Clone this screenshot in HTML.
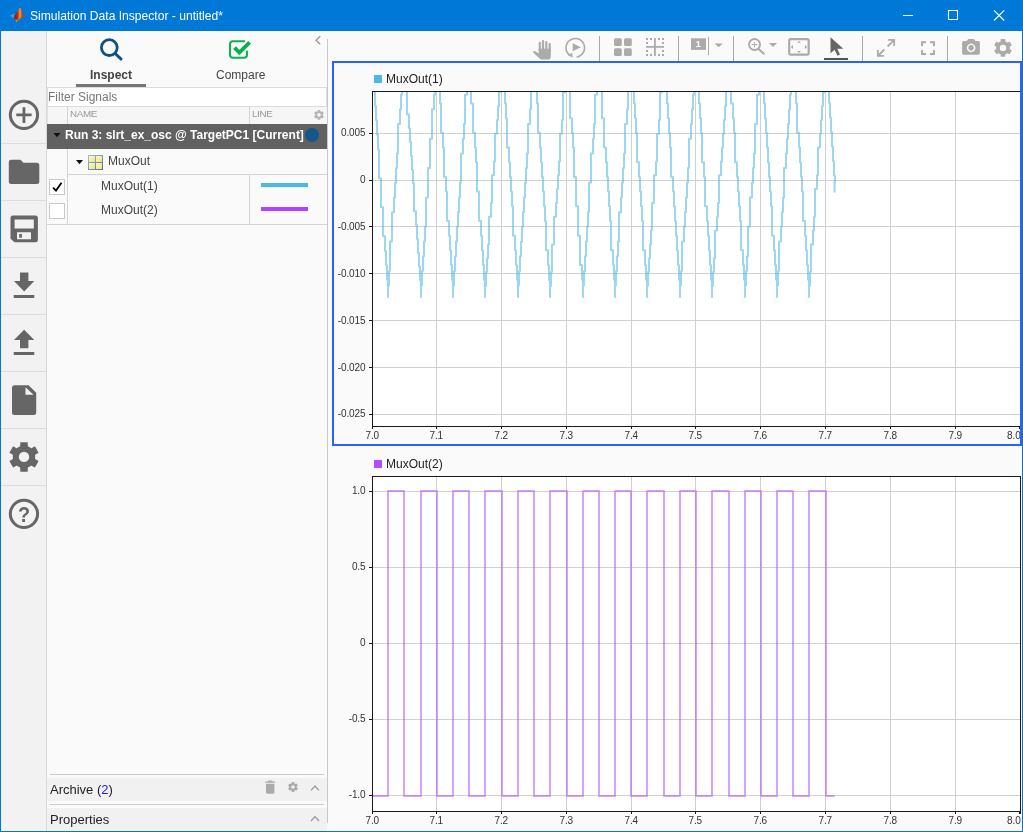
<!DOCTYPE html>
<html lang="en">
<head>
<meta charset="utf-8">
<title>Simulation Data Inspector - untitled*</title>
<style>
html,body{margin:0;padding:0;}
body{width:1023px;height:832px;overflow:hidden;background:#fafafa;font-family:"Liberation Sans",sans-serif;position:relative;will-change:transform;}
.abs{position:absolute;}
.t{position:absolute;white-space:nowrap;line-height:1;}
#titlebar{left:0;top:0;width:1023px;height:31px;background:#0078d7;}
#title{left:30px;top:10px;font-size:12.1px;color:#fff;}
#winborder{left:0;top:31px;width:1021px;height:800px;border:1px solid #0078d7;border-top:none;pointer-events:none;}
#sidebar{left:1px;top:31px;width:45px;height:800px;background:#f2f2f2;border-right:1px solid #d9d9d9;}
.sep{position:absolute;left:1px;width:45px;height:1px;background:#dcdcdc;}
#panel{left:47px;top:31px;width:280px;height:800px;background:#fafafa;}
#panelborder{left:327px;top:39px;width:1px;height:784px;background:#c8c8c8;}
#tabline{left:76px;top:84px;width:70px;height:3px;background:#777;}
#filter{left:47px;top:87px;width:280px;background:#fff;border:1px solid #dcdcdc;box-sizing:border-box;height:20px;}
#hdr{left:47px;top:107px;width:280px;height:17px;background:#f6f6f6;border-left:1px solid #e4e4e4;box-sizing:border-box;}
#runrow{left:47px;top:124px;width:280px;height:25px;background:#616161;}
.vline{position:absolute;width:1px;background:#d4d4d4;}
.hline{position:absolute;height:1px;background:#d4d4d4;}
.cb{position:absolute;width:14px;height:14px;border:1px solid #c8c8c8;background:#fff;}
#archive{left:47px;top:778px;width:280px;height:23px;background:#f1f1f1;}
#props{left:47px;top:808px;width:280px;height:23px;background:#f1f1f1;}
#toolbar{left:328px;top:31px;width:694px;height:30px;background:#fafafa;}
</style>
</head>
<body>
<div id="titlebar" class="abs"></div>
<div id="title" class="t">Simulation Data Inspector - untitled*</div>

<div id="sidebar" class="abs"></div>
<div class="sep" style="top:143px"></div>
<div class="sep" style="top:200px"></div>
<div class="sep" style="top:257px"></div>
<div class="sep" style="top:314px"></div>
<div class="sep" style="top:371px"></div>
<div class="sep" style="top:428px"></div>
<div class="sep" style="top:485px"></div>
<div id="panel" class="abs"></div>
<div id="toolbar" class="abs"></div>
<div id="panelborder" class="abs"></div>

<div class="t" style="left:90px;top:69px;font-size:12px;font-weight:bold;color:#444;">Inspect</div>
<div class="t" style="left:216px;top:69px;font-size:12px;color:#444;">Compare</div>
<div id="tabline" class="abs"></div>
<div id="filter" class="abs"></div>
<div class="t" style="left:48px;top:91px;font-size:12px;color:#777;">Filter Signals</div>
<div id="hdr" class="abs"></div>
<div class="vline" style="left:67px;top:107px;height:17px;"></div>
<div class="vline" style="left:249px;top:107px;height:17px;"></div>
<div class="t" style="left:70px;top:109px;font-size:9.8px;letter-spacing:-0.35px;color:#999;">NAME</div>
<div class="t" style="left:252px;top:109px;font-size:9.8px;letter-spacing:-0.35px;color:#999;">LINE</div>
<div id="runrow" class="abs"></div>
<div class="t" style="left:65px;top:129px;font-size:12px;font-weight:bold;color:#fff;">Run 3: slrt_ex_osc @ TargetPC1 [Current]</div>
<div class="vline" style="left:67px;top:149px;height:75px;"></div>
<div class="hline" style="left:67px;top:174px;width:260px;"></div>
<div class="vline" style="left:249px;top:174px;height:50px;"></div>
<div class="hline" style="left:47px;top:224px;width:280px;"></div>
<div class="t" style="left:108px;top:155px;font-size:12px;color:#444;">MuxOut</div>
<div class="cb" style="left:49px;top:179px;"></div>
<div class="cb" style="left:49px;top:203px;"></div>
<div class="t" style="left:101px;top:180px;font-size:12px;color:#444;">MuxOut(1)</div>
<div class="t" style="left:101px;top:204px;font-size:12px;color:#444;">MuxOut(2)</div>
<div class="abs" style="left:261px;top:183px;width:47px;height:4px;background:#4ab9e9;"></div>
<div class="abs" style="left:261px;top:207px;width:47px;height:4px;background:#b142ff;"></div>

<div class="hline" style="left:50px;top:774px;width:274px;background:#ccc;"></div>
<div id="archive" class="abs"></div>
<div class="t" style="left:50px;top:783px;font-size:13px;color:#222;">Archive (<span style="color:#1a1aff">2</span>)</div>
<div class="hline" style="left:50px;top:804px;width:274px;background:#ccc;"></div>
<div id="props" class="abs"></div>
<div class="t" style="left:50px;top:813px;font-size:13px;color:#222;">Properties</div>

<svg class="plots" width="1023" height="832" viewBox="0 0 1023 832" style="position:absolute;left:0;top:0">
<rect x="372" y="91" width="648" height="336" fill="#fff"/>
<rect x="372" y="476" width="650" height="336" fill="#fff"/>
<path d="M436.5 92V426 M436.5 477V811 M501.5 92V426 M501.5 477V811 M566.5 92V426 M566.5 477V811 M631.5 92V426 M631.5 477V811 M695.5 92V426 M695.5 477V811 M760.5 92V426 M760.5 477V811 M825.5 92V426 M825.5 477V811 M890.5 92V426 M890.5 477V811 M955.5 92V426 M955.5 477V811 M373 133.5H1020 M373 180.5H1020 M373 226.5H1020 M373 273.5H1020 M373 320.5H1020 M373 367.5H1020 M373 414.5H1020 M373 491.5H1021 M373 567.5H1021 M373 643.5H1021 M373 719.5H1021 M373 795.5H1021" stroke="#d0d0d0" stroke-width="1" fill="none" shape-rendering="crispEdges"/>
<defs><clipPath id="c1"><rect x="373" y="92" width="647" height="334"/></clipPath><clipPath id="c2"><rect x="372" y="477" width="649" height="334"/></clipPath></defs>
<path d="M374.0 76.8 L374.0 91.3 L375.0 91.3 L375.0 105.8 L376.0 105.8 L376.0 120.3 L377.0 120.3 L377.0 134.8 L378.0 134.8 L378.0 149.3 L379.0 149.3 L379.0 178.3 L381.0 178.3 L381.0 207.3 L383.0 207.3 L383.0 236.3 L385.0 236.3 L385.0 250.8 L386.0 250.8 L386.0 265.3 L387.0 265.3 L387.0 279.8 L388.0 279.8 L388.0 297.0 L388.0 285.6 L389.0 285.6 L389.0 270.9 L390.0 270.9 L390.0 241.5 L392.0 241.5 L392.0 212.2 L394.0 212.2 L394.0 197.5 L395.0 197.5 L395.0 182.8 L396.0 182.8 L396.0 168.1 L397.0 168.1 L397.0 153.4 L398.0 153.4 L398.0 124.0 L400.0 124.0 L400.0 109.3 L401.0 109.3 L401.0 94.7 L402.0 94.7 L402.0 65.3 L404.0 65.3 L404.0 55.7 L404.0 59.1 L405.0 59.1 L405.0 73.0 L406.0 73.0 L406.0 86.8 L407.0 86.8 L407.0 114.4 L409.0 114.4 L409.0 128.3 L410.0 128.3 L410.0 142.1 L411.0 142.1 L411.0 155.9 L412.0 155.9 L412.0 169.7 L413.0 169.7 L413.0 183.6 L414.0 183.6 L414.0 211.2 L416.0 211.2 L416.0 225.0 L417.0 225.0 L417.0 238.9 L418.0 238.9 L418.0 252.7 L419.0 252.7 L419.0 266.5 L420.0 266.5 L420.0 280.3 L421.0 280.3 L421.0 297.0 L421.0 285.6 L422.0 285.6 L422.0 270.9 L423.0 270.9 L423.0 256.2 L424.0 256.2 L424.0 241.5 L425.0 241.5 L425.0 226.8 L426.0 226.8 L426.0 197.5 L428.0 197.5 L428.0 168.1 L430.0 168.1 L430.0 138.7 L432.0 138.7 L432.0 109.3 L434.0 109.3 L434.0 94.7 L435.0 94.7 L435.0 80.0 L436.0 80.0 L436.0 65.3 L437.0 65.3 L437.0 55.7 L437.0 74.1 L439.0 74.1 L439.0 88.8 L440.0 88.8 L440.0 103.5 L441.0 103.5 L441.0 132.8 L443.0 132.8 L443.0 147.5 L444.0 147.5 L444.0 176.9 L446.0 176.9 L446.0 191.6 L447.0 191.6 L447.0 221.0 L449.0 221.0 L449.0 235.7 L450.0 235.7 L450.0 250.3 L451.0 250.3 L451.0 265.0 L452.0 265.0 L452.0 279.7 L453.0 279.7 L453.0 297.0 L453.0 285.6 L454.0 285.6 L454.0 270.9 L455.0 270.9 L455.0 256.2 L456.0 256.2 L456.0 241.5 L457.0 241.5 L457.0 226.8 L458.0 226.8 L458.0 212.2 L459.0 212.2 L459.0 197.5 L460.0 197.5 L460.0 182.8 L461.0 182.8 L461.0 153.4 L463.0 153.4 L463.0 138.7 L464.0 138.7 L464.0 124.0 L465.0 124.0 L465.0 94.7 L467.0 94.7 L467.0 80.0 L468.0 80.0 L468.0 65.3 L469.0 65.3 L469.0 55.7 L469.0 74.1 L471.0 74.1 L471.0 103.5 L473.0 103.5 L473.0 132.8 L475.0 132.8 L475.0 147.5 L476.0 147.5 L476.0 162.2 L477.0 162.2 L477.0 191.6 L479.0 191.6 L479.0 221.0 L481.0 221.0 L481.0 235.7 L482.0 235.7 L482.0 250.3 L483.0 250.3 L483.0 265.0 L484.0 265.0 L484.0 279.7 L485.0 279.7 L485.0 297.0 L485.0 285.9 L486.0 285.9 L486.0 272.0 L487.0 272.0 L487.0 258.2 L488.0 258.2 L488.0 244.4 L489.0 244.4 L489.0 216.7 L491.0 216.7 L491.0 202.9 L492.0 202.9 L492.0 175.3 L494.0 175.3 L494.0 161.4 L495.0 161.4 L495.0 133.8 L497.0 133.8 L497.0 120.0 L498.0 120.0 L498.0 106.1 L499.0 106.1 L499.0 92.3 L500.0 92.3 L500.0 64.7 L502.0 64.7 L502.0 55.7 L502.0 74.1 L504.0 74.1 L504.0 88.8 L505.0 88.8 L505.0 103.5 L506.0 103.5 L506.0 118.2 L507.0 118.2 L507.0 147.5 L509.0 147.5 L509.0 162.2 L510.0 162.2 L510.0 176.9 L511.0 176.9 L511.0 191.6 L512.0 191.6 L512.0 206.3 L513.0 206.3 L513.0 235.7 L515.0 235.7 L515.0 250.3 L516.0 250.3 L516.0 265.0 L517.0 265.0 L517.0 279.7 L518.0 279.7 L518.0 297.0 L518.0 285.6 L519.0 285.6 L519.0 270.9 L520.0 270.9 L520.0 256.2 L521.0 256.2 L521.0 241.5 L522.0 241.5 L522.0 226.8 L523.0 226.8 L523.0 212.2 L524.0 212.2 L524.0 197.5 L525.0 197.5 L525.0 182.8 L526.0 182.8 L526.0 168.1 L527.0 168.1 L527.0 153.4 L528.0 153.4 L528.0 124.0 L530.0 124.0 L530.0 109.3 L531.0 109.3 L531.0 80.0 L533.0 80.0 L533.0 65.3 L534.0 65.3 L534.0 55.7 L534.0 59.4 L535.0 59.4 L535.0 74.1 L536.0 74.1 L536.0 88.8 L537.0 88.8 L537.0 103.5 L538.0 103.5 L538.0 132.8 L540.0 132.8 L540.0 147.5 L541.0 147.5 L541.0 162.2 L542.0 162.2 L542.0 176.9 L543.0 176.9 L543.0 191.6 L544.0 191.6 L544.0 206.3 L545.0 206.3 L545.0 221.0 L546.0 221.0 L546.0 250.3 L548.0 250.3 L548.0 265.0 L549.0 265.0 L549.0 279.7 L550.0 279.7 L550.0 297.0 L550.0 285.9 L551.0 285.9 L551.0 272.0 L552.0 272.0 L552.0 244.4 L554.0 244.4 L554.0 216.7 L556.0 216.7 L556.0 202.9 L557.0 202.9 L557.0 189.1 L558.0 189.1 L558.0 175.3 L559.0 175.3 L559.0 161.4 L560.0 161.4 L560.0 133.8 L562.0 133.8 L562.0 120.0 L563.0 120.0 L563.0 92.3 L565.0 92.3 L565.0 78.5 L566.0 78.5 L566.0 64.7 L567.0 64.7 L567.0 55.7 L567.0 59.4 L568.0 59.4 L568.0 88.8 L570.0 88.8 L570.0 118.2 L572.0 118.2 L572.0 132.8 L573.0 132.8 L573.0 147.5 L574.0 147.5 L574.0 176.9 L576.0 176.9 L576.0 206.3 L578.0 206.3 L578.0 235.7 L580.0 235.7 L580.0 265.0 L582.0 265.0 L582.0 279.7 L583.0 279.7 L583.0 297.0 L583.0 285.6 L584.0 285.6 L584.0 270.9 L585.0 270.9 L585.0 256.2 L586.0 256.2 L586.0 241.5 L587.0 241.5 L587.0 226.8 L588.0 226.8 L588.0 212.2 L589.0 212.2 L589.0 182.8 L591.0 182.8 L591.0 153.4 L593.0 153.4 L593.0 138.7 L594.0 138.7 L594.0 124.0 L595.0 124.0 L595.0 94.7 L597.0 94.7 L597.0 80.0 L598.0 80.0 L598.0 65.3 L599.0 65.3 L599.0 55.7 L599.0 59.4 L600.0 59.4 L600.0 88.8 L602.0 88.8 L602.0 118.2 L604.0 118.2 L604.0 147.5 L606.0 147.5 L606.0 162.2 L607.0 162.2 L607.0 176.9 L608.0 176.9 L608.0 191.6 L609.0 191.6 L609.0 206.3 L610.0 206.3 L610.0 221.0 L611.0 221.0 L611.0 250.3 L613.0 250.3 L613.0 265.0 L614.0 265.0 L614.0 279.7 L615.0 279.7 L615.0 297.0 L615.0 285.6 L616.0 285.6 L616.0 270.9 L617.0 270.9 L617.0 256.2 L618.0 256.2 L618.0 241.5 L619.0 241.5 L619.0 212.2 L621.0 212.2 L621.0 197.5 L622.0 197.5 L622.0 182.8 L623.0 182.8 L623.0 168.1 L624.0 168.1 L624.0 153.4 L625.0 153.4 L625.0 124.0 L627.0 124.0 L627.0 109.3 L628.0 109.3 L628.0 80.0 L630.0 80.0 L630.0 65.3 L631.0 65.3 L631.0 55.7 L631.0 59.4 L632.0 59.4 L632.0 88.8 L634.0 88.8 L634.0 103.5 L635.0 103.5 L635.0 118.2 L636.0 118.2 L636.0 132.8 L637.0 132.8 L637.0 162.2 L639.0 162.2 L639.0 176.9 L640.0 176.9 L640.0 191.6 L641.0 191.6 L641.0 206.3 L642.0 206.3 L642.0 221.0 L643.0 221.0 L643.0 250.3 L645.0 250.3 L645.0 265.0 L646.0 265.0 L646.0 279.7 L647.0 279.7 L647.0 297.0 L647.0 285.9 L648.0 285.9 L648.0 272.0 L649.0 272.0 L649.0 258.2 L650.0 258.2 L650.0 244.4 L651.0 244.4 L651.0 230.6 L652.0 230.6 L652.0 202.9 L654.0 202.9 L654.0 175.3 L656.0 175.3 L656.0 161.4 L657.0 161.4 L657.0 133.8 L659.0 133.8 L659.0 120.0 L660.0 120.0 L660.0 92.3 L662.0 92.3 L662.0 78.5 L663.0 78.5 L663.0 64.7 L664.0 64.7 L664.0 55.7 L664.0 74.1 L666.0 74.1 L666.0 88.8 L667.0 88.8 L667.0 103.5 L668.0 103.5 L668.0 118.2 L669.0 118.2 L669.0 132.8 L670.0 132.8 L670.0 147.5 L671.0 147.5 L671.0 176.9 L673.0 176.9 L673.0 191.6 L674.0 191.6 L674.0 206.3 L675.0 206.3 L675.0 221.0 L676.0 221.0 L676.0 235.7 L677.0 235.7 L677.0 250.3 L678.0 250.3 L678.0 265.0 L679.0 265.0 L679.0 279.7 L680.0 279.7 L680.0 297.0 L680.0 285.6 L681.0 285.6 L681.0 270.9 L682.0 270.9 L682.0 241.5 L684.0 241.5 L684.0 226.8 L685.0 226.8 L685.0 212.2 L686.0 212.2 L686.0 197.5 L687.0 197.5 L687.0 182.8 L688.0 182.8 L688.0 168.1 L689.0 168.1 L689.0 138.7 L691.0 138.7 L691.0 124.0 L692.0 124.0 L692.0 109.3 L693.0 109.3 L693.0 94.7 L694.0 94.7 L694.0 80.0 L695.0 80.0 L695.0 65.3 L696.0 65.3 L696.0 55.7 L696.0 59.4 L697.0 59.4 L697.0 74.1 L698.0 74.1 L698.0 88.8 L699.0 88.8 L699.0 103.5 L700.0 103.5 L700.0 118.2 L701.0 118.2 L701.0 132.8 L702.0 132.8 L702.0 162.2 L704.0 162.2 L704.0 176.9 L705.0 176.9 L705.0 206.3 L707.0 206.3 L707.0 221.0 L708.0 221.0 L708.0 235.7 L709.0 235.7 L709.0 250.3 L710.0 250.3 L710.0 265.0 L711.0 265.0 L711.0 279.7 L712.0 279.7 L712.0 297.0 L712.0 285.9 L713.0 285.9 L713.0 272.0 L714.0 272.0 L714.0 258.2 L715.0 258.2 L715.0 230.6 L717.0 230.6 L717.0 216.7 L718.0 216.7 L718.0 202.9 L719.0 202.9 L719.0 175.3 L721.0 175.3 L721.0 161.4 L722.0 161.4 L722.0 147.6 L723.0 147.6 L723.0 133.8 L724.0 133.8 L724.0 120.0 L725.0 120.0 L725.0 106.1 L726.0 106.1 L726.0 78.5 L728.0 78.5 L728.0 64.7 L729.0 64.7 L729.0 55.7 L729.0 74.1 L731.0 74.1 L731.0 103.5 L733.0 103.5 L733.0 118.2 L734.0 118.2 L734.0 132.8 L735.0 132.8 L735.0 162.2 L737.0 162.2 L737.0 176.9 L738.0 176.9 L738.0 191.6 L739.0 191.6 L739.0 206.3 L740.0 206.3 L740.0 221.0 L741.0 221.0 L741.0 250.3 L743.0 250.3 L743.0 265.0 L744.0 265.0 L744.0 279.7 L745.0 279.7 L745.0 297.0 L745.0 285.6 L746.0 285.6 L746.0 270.9 L747.0 270.9 L747.0 256.2 L748.0 256.2 L748.0 226.8 L750.0 226.8 L750.0 197.5 L752.0 197.5 L752.0 182.8 L753.0 182.8 L753.0 168.1 L754.0 168.1 L754.0 153.4 L755.0 153.4 L755.0 124.0 L757.0 124.0 L757.0 94.7 L759.0 94.7 L759.0 80.0 L760.0 80.0 L760.0 65.3 L761.0 65.3 L761.0 55.7 L761.0 59.4 L762.0 59.4 L762.0 88.8 L764.0 88.8 L764.0 103.5 L765.0 103.5 L765.0 118.2 L766.0 118.2 L766.0 132.8 L767.0 132.8 L767.0 147.5 L768.0 147.5 L768.0 162.2 L769.0 162.2 L769.0 176.9 L770.0 176.9 L770.0 191.6 L771.0 191.6 L771.0 206.3 L772.0 206.3 L772.0 235.7 L774.0 235.7 L774.0 250.3 L775.0 250.3 L775.0 265.0 L776.0 265.0 L776.0 279.7 L777.0 279.7 L777.0 297.0 L777.0 285.6 L778.0 285.6 L778.0 270.9 L779.0 270.9 L779.0 241.5 L781.0 241.5 L781.0 226.8 L782.0 226.8 L782.0 212.2 L783.0 212.2 L783.0 197.5 L784.0 197.5 L784.0 168.1 L786.0 168.1 L786.0 153.4 L787.0 153.4 L787.0 138.7 L788.0 138.7 L788.0 124.0 L789.0 124.0 L789.0 109.3 L790.0 109.3 L790.0 94.7 L791.0 94.7 L791.0 80.0 L792.0 80.0 L792.0 65.3 L793.0 65.3 L793.0 55.7 L793.0 74.1 L795.0 74.1 L795.0 88.8 L796.0 88.8 L796.0 103.5 L797.0 103.5 L797.0 132.8 L799.0 132.8 L799.0 147.5 L800.0 147.5 L800.0 162.2 L801.0 162.2 L801.0 176.9 L802.0 176.9 L802.0 191.6 L803.0 191.6 L803.0 221.0 L805.0 221.0 L805.0 235.7 L806.0 235.7 L806.0 250.3 L807.0 250.3 L807.0 265.0 L808.0 265.0 L808.0 279.7 L809.0 279.7 L809.0 297.0 L809.0 285.9 L810.0 285.9 L810.0 272.0 L811.0 272.0 L811.0 244.4 L813.0 244.4 L813.0 230.6 L814.0 230.6 L814.0 216.7 L815.0 216.7 L815.0 189.1 L817.0 189.1 L817.0 175.3 L818.0 175.3 L818.0 147.6 L820.0 147.6 L820.0 133.8 L821.0 133.8 L821.0 120.0 L822.0 120.0 L822.0 106.1 L823.0 106.1 L823.0 92.3 L824.0 92.3 L824.0 78.5 L825.0 78.5 L825.0 64.7 L826.0 64.7 L826.0 55.7 L826.0 59.4 L827.0 59.4 L827.0 73.9 L828.0 73.9 L828.0 88.4 L829.0 88.4 L829.0 102.9 L830.0 102.9 L830.0 117.4 L831.0 117.4 L831.0 131.9 L832.0 131.9 L832.0 146.4 L833.0 146.4 L833.0 160.9 L834.0 160.9 L834.0 175.4 L835.0 175.4 L835.0 182.7 L834.5 180.0 L834.5 192.5" clip-path="url(#c1)" stroke="#4db8e8" stroke-opacity="0.56" stroke-width="2" fill="none" stroke-linejoin="round"/>
<path d="M372.0 796.0 H388.0 V491.0 H404.0 V796.0 H421.0 V491.0 H437.0 V796.0 H453.0 V491.0 H469.0 V796.0 H485.0 V491.0 H502.0 V796.0 H518.0 V491.0 H534.0 V796.0 H550.0 V491.0 H567.0 V796.0 H583.0 V491.0 H599.0 V796.0 H615.0 V491.0 H631.0 V796.0 H647.0 V491.0 H664.0 V796.0 H680.0 V491.0 H696.0 V796.0 H712.0 V491.0 H729.0 V796.0 H745.0 V491.0 H761.0 V796.0 H777.0 V491.0 H793.0 V796.0 H809.0 V491.0 H826.0 V796.0 H834.5" clip-path="url(#c2)" stroke="#b34dff" stroke-opacity="0.52" stroke-width="2" fill="none" stroke-linejoin="round"/>
<path d="M372.5 91V429 M372 91.5H1020 M372 426.5H1020 M372.5 476V814 M372 476.5H1021 M372 811.5H1021 M1020.5 476V814 M436.5 426V429 M436.5 811V814 M501.5 426V429 M501.5 811V814 M566.5 426V429 M566.5 811V814 M631.5 426V429 M631.5 811V814 M695.5 426V429 M695.5 811V814 M760.5 426V429 M760.5 811V814 M825.5 426V429 M825.5 811V814 M890.5 426V429 M890.5 811V814 M955.5 426V429 M955.5 811V814 M1019.5 426V429 M1019.5 811V814 M369 133.5H372 M369 180.5H372 M369 226.5H372 M369 273.5H372 M369 320.5H372 M369 367.5H372 M369 414.5H372 M369 491.5H372 M369 567.5H372 M369 643.5H372 M369 719.5H372 M369 795.5H372" stroke="#1a1a1a" stroke-width="1" fill="none" shape-rendering="crispEdges"/>
<g font-family="'Liberation Sans', sans-serif" font-size="10" letter-spacing="-0.1" fill="#333">
<text x="365.5" y="136.2" text-anchor="end">0.005</text>
<text x="365.5" y="183.1" text-anchor="end">0</text>
<text x="365.5" y="230.0" text-anchor="end">-0.005</text>
<text x="365.5" y="276.8" text-anchor="end">-0.010</text>
<text x="365.5" y="323.7" text-anchor="end">-0.015</text>
<text x="365.5" y="370.6" text-anchor="end">-0.020</text>
<text x="365.5" y="417.4" text-anchor="end">-0.025</text>
<text x="365.5" y="494.1" text-anchor="end">1.0</text>
<text x="365.5" y="570.1" text-anchor="end">0.5</text>
<text x="365.5" y="646.1" text-anchor="end">0</text>
<text x="365.5" y="722.1" text-anchor="end">-0.5</text>
<text x="365.5" y="798.1" text-anchor="end">-1.0</text>
<text x="372.3" y="439" text-anchor="middle">7.0</text>
<text x="372.3" y="824" text-anchor="middle">7.0</text>
<text x="436.3" y="439" text-anchor="middle">7.1</text>
<text x="436.3" y="824" text-anchor="middle">7.1</text>
<text x="501.3" y="439" text-anchor="middle">7.2</text>
<text x="501.3" y="824" text-anchor="middle">7.2</text>
<text x="566.3" y="439" text-anchor="middle">7.3</text>
<text x="566.3" y="824" text-anchor="middle">7.3</text>
<text x="631.3" y="439" text-anchor="middle">7.4</text>
<text x="631.3" y="824" text-anchor="middle">7.4</text>
<text x="695.3" y="439" text-anchor="middle">7.5</text>
<text x="695.3" y="824" text-anchor="middle">7.5</text>
<text x="760.3" y="439" text-anchor="middle">7.6</text>
<text x="760.3" y="824" text-anchor="middle">7.6</text>
<text x="825.3" y="439" text-anchor="middle">7.7</text>
<text x="825.3" y="824" text-anchor="middle">7.7</text>
<text x="890.3" y="439" text-anchor="middle">7.8</text>
<text x="890.3" y="824" text-anchor="middle">7.8</text>
<text x="955.3" y="439" text-anchor="middle">7.9</text>
<text x="955.3" y="824" text-anchor="middle">7.9</text>
<text x="1007" y="439">8.0</text>
<text x="1007" y="824">8.0</text>
</g>
<rect x="374" y="75" width="8" height="8" fill="#4db8e8"/>
<rect x="374" y="460" width="8" height="8" fill="#b34dff"/>
<g font-family="'Liberation Sans', sans-serif" font-size="12" fill="#222">
<text x="386" y="83">MuxOut(1)</text>
<text x="386" y="468">MuxOut(2)</text>
</g>
<rect x="333" y="62" width="688" height="383" fill="none" stroke="#2962ff" stroke-width="2" shape-rendering="crispEdges"/>
</svg>
<svg class="icons" width="1023" height="832" viewBox="0 0 1023 832" style="position:absolute;left:0;top:0">
<circle cx="23.95" cy="114.85" r="13.65" fill="none" stroke="#666" stroke-width="3"/>
<path d="M16.3 114.9H31.6M23.95 107.3V122.9" stroke="#666" stroke-width="2.8" fill="none"/>
<path d="M11.3 159.7H20.5L23.5 162.7H36.8Q39.3 162.7 39.3 165.2V181.4Q39.3 183.9 36.8 183.9H11.3Q8.8 183.9 8.8 181.4V162.2Q8.8 159.7 11.3 159.7Z" fill="#666"/>
<path d="M13 215.4H35.4Q37.9 215.4 37.9 217.9V239.8Q37.9 242.3 35.4 242.3H14.5L10.5 238.8V217.9Q10.5 215.4 13 215.4Z M14.6 219.4V228.4H33.8V219.4Z M17 232.2V239.2H31V232.2Z M19.2 234V237.8H21.9V234Z" fill="#666" fill-rule="evenodd"/>
<path d="M20 272.6H28.4V281H34.3L24.15 291.5L14 281H20Z M13.7 295.1H34.3V297.9H13.7Z" fill="#666"/>
<path d="M24.15 329.8L34.3 340H28.4V348.3H20V340H14Z M13.7 352H34.3V355H13.7Z" fill="#666"/>
<path d="M14.5 385.2H28.6L36.2 392.8V412.5Q36.2 415 33.7 415H14.5Q12 415 12 412.5V387.7Q12 385.2 14.5 385.2Z M25.5 387.3V394.8H33.5Z" fill="#666" fill-rule="evenodd"/>
<path d="M20.13 446.63 L20.32 442.15 L27.68 442.15 L27.87 446.63 L30.96 448.42 L34.93 446.34 L38.61 452.72 L34.83 455.11 L34.83 458.69 L38.61 461.08 L34.93 467.46 L30.96 465.38 L27.87 467.17 L27.68 471.65 L20.32 471.65 L20.13 467.17 L17.04 465.38 L13.07 467.46 L9.39 461.08 L13.17 458.69 L13.17 455.11 L9.39 452.72 L13.07 446.34 L17.04 448.42Z M12.80 456.90 a11.20 11.20 0 1 1 22.40 0 a11.20 11.20 0 1 1 -22.40 0Z" fill="#666" fill-rule="nonzero"/>
<circle cx="24" cy="456.9" r="5.2" fill="#f2f2f2"/>
<circle cx="23.95" cy="513.85" r="13.65" fill="none" stroke="#666" stroke-width="3"/>
<text transform="translate(24.1,521.9) scale(0.9,1)" x="0" y="0" text-anchor="middle" font-family="'Liberation Sans', sans-serif" font-weight="bold" font-size="22" fill="#666">?</text>
<circle cx="109.3" cy="47.6" r="7.9" fill="none" stroke="#0b5186" stroke-width="2.8"/>
<path d="M115.2 53.5L121 59" stroke="#0b5186" stroke-width="3" stroke-linecap="round" fill="none"/>
<path d="M244.3 41.2H233Q230 41.2 230 44.2V54.8Q230 57.8 233 57.8H244Q247 57.8 247 54.8V51.5" fill="none" stroke="#0fb053" stroke-width="2" stroke-linecap="round"/>
<path d="M234.5 47.7L239.4 52.6L249.6 42.3" fill="none" stroke="#0db050" stroke-width="3.9"/>
<path d="M320.2 36.2L316 40.2L320.2 44.2" fill="none" stroke="#999" stroke-width="1.3"/>
<path d="M317.69 111.41 L317.76 109.95 L320.24 109.95 L320.31 111.41 L321.36 112.02 L322.67 111.36 L323.90 113.50 L322.67 114.29 L322.67 115.51 L323.90 116.30 L322.67 118.44 L321.36 117.78 L320.31 118.39 L320.24 119.85 L317.76 119.85 L317.69 118.39 L316.64 117.78 L315.33 118.44 L314.10 116.30 L315.33 115.51 L315.33 114.29 L314.10 113.50 L315.33 111.36 L316.64 112.02Z M315.20 114.90 a3.80 3.80 0 1 1 7.60 0 a3.80 3.80 0 1 1 -7.60 0Z" fill="#b4b4b4" fill-rule="nonzero"/>
<circle cx="319" cy="114.9" r="1.8" fill="#f7f7f7"/>
<path d="M53.5 133L60.5 133L57 137.2Z" fill="#111"/>
<circle cx="312" cy="135" r="7" fill="#15568c"/>
<path d="M76 160L83 160L79.5 164.2Z" fill="#111"/>
<defs><linearGradient id="bg1" x1="0" y1="0" x2="1" y2="1"><stop offset="0" stop-color="#9dc0e6"/><stop offset="1" stop-color="#4e6f90"/></linearGradient></defs><rect x="88" y="155" width="15" height="15" fill="url(#bg1)"/>
<defs><linearGradient id="yg" x1="0" y1="0" x2="1" y2="1"><stop offset="0" stop-color="#fdf8c8"/><stop offset="1" stop-color="#f3e278"/></linearGradient></defs>
<rect x="89" y="156" width="6" height="6" fill="url(#yg)"/><rect x="96" y="156" width="6" height="6" fill="url(#yg)"/>
<rect x="89" y="163" width="6" height="6" fill="url(#yg)"/><rect x="96" y="163" width="6" height="6" fill="url(#yg)"/>
<path d="M53.1 187.7L56 190.6L61.5 182.7" fill="none" stroke="#000" stroke-width="1.8"/>
<path d="M265.3 781.6H275V782.8H265.3Z M268 780.4H272.3V781.6H268Z M266 783.8H274.4V792.3Q274.4 793.8 272.9 793.8H267.5Q266 793.8 266 792.3Z" fill="#aaa"/>
<path d="M291.69 783.51 L291.76 782.05 L294.24 782.05 L294.31 783.51 L295.36 784.12 L296.67 783.46 L297.90 785.60 L296.67 786.39 L296.67 787.61 L297.90 788.40 L296.67 790.54 L295.36 789.88 L294.31 790.49 L294.24 791.95 L291.76 791.95 L291.69 790.49 L290.64 789.88 L289.33 790.54 L288.10 788.40 L289.33 787.61 L289.33 786.39 L288.10 785.60 L289.33 783.46 L290.64 784.12Z M289.20 787.00 a3.80 3.80 0 1 1 7.60 0 a3.80 3.80 0 1 1 -7.60 0Z" fill="#aaa" fill-rule="nonzero"/>
<circle cx="293" cy="787" r="1.8" fill="#f1f1f1"/>
<path d="M311 790.4L315 786L319 790.4" fill="none" stroke="#999" stroke-width="1.3"/>
<path d="M311 821L315 816.6L319 821" fill="none" stroke="#999" stroke-width="1.3"/>
<g fill="#ababab">
<rect x="538.7" y="41.8" width="2.2" height="10" rx="1.1"/>
<rect x="541.9" y="39.9" width="2.2" height="12" rx="1.1"/>
<rect x="545.2" y="40.9" width="2.2" height="11" rx="1.1"/>
<rect x="548.6" y="43" width="2.2" height="9" rx="1.1"/>
<path d="M538.7 48.8H550.8V57.2Q550.8 59.6 548.4 59.6H542.5Q540.8 59.6 539.6 58.4L533.2 52.6Q532.6 51.8 533.6 51.2Q534.6 50.7 535.6 51.4L538.7 53.6Z"/>
</g>
<path d="M576.6 57A9.3 9.3 0 1 0 569.4 55" fill="none" stroke="#ababab" stroke-width="1.6"/>
<path d="M567.8 55.2L572.2 52.8L572.7 57.5Z" fill="#ababab"/>
<path d="M572.7 43.2L580.9 47.3L572.7 51.3Z" fill="#ababab"/>
<path d="M599.5 36V61" stroke="#a8a8a8" stroke-width="1" shape-rendering="crispEdges"/>
<path d="M678.5 36V61" stroke="#a8a8a8" stroke-width="1" shape-rendering="crispEdges"/>
<path d="M733.5 36V61" stroke="#a8a8a8" stroke-width="1" shape-rendering="crispEdges"/>
<path d="M862.5 36V61" stroke="#a8a8a8" stroke-width="1" shape-rendering="crispEdges"/>
<path d="M947.5 36V61" stroke="#a8a8a8" stroke-width="1" shape-rendering="crispEdges"/>
<rect x="614.0" y="38.3" width="7.8" height="7.8" rx="1.5" fill="#ababab"/>
<rect x="624.0" y="38.3" width="7.8" height="7.8" rx="1.5" fill="#ababab"/>
<rect x="614.0" y="48.3" width="7.8" height="7.8" rx="1.5" fill="#ababab"/>
<rect x="624.0" y="48.3" width="7.8" height="7.8" rx="1.5" fill="#ababab"/>
<path d="M646 38h2v2h-2Z M646 54h2v2h-2Z M650 38h2v2h-2Z M650 54h2v2h-2Z M658 38h2v2h-2Z M658 54h2v2h-2Z M662 38h2v2h-2Z M662 54h2v2h-2Z M646 42h2v2h-2Z M662 42h2v2h-2Z M646 50h2v2h-2Z M662 50h2v2h-2Z M654 38h1.8v18h-1.8Z M646 46h18v1.8h-18Z" fill="#ababab"/>
<rect x="691" y="38.3" width="15" height="11.6" fill="#ababab"/>
<text x="698.3" y="47" text-anchor="middle" font-family="'Liberation Sans', sans-serif" font-weight="bold" font-size="9" fill="#fff">1</text>
<path d="M708.5 37V55" stroke="#ababab" stroke-width="1" shape-rendering="crispEdges"/>
<path d="M714.6 43.5H722.8L718.7 47.2Z" fill="#ababab"/>
<circle cx="754.55" cy="44.55" r="5.5" fill="none" stroke="#ababab" stroke-width="1.9"/>
<path d="M758.6 49L764.4 54.3" stroke="#ababab" stroke-width="2" fill="none"/>
<path d="M751.7 44.55H757.3M754.5 42V47.1" stroke="#ababab" stroke-width="1" fill="none"/>
<path d="M768.9 43H777.1L773 46.9Z" fill="#ababab"/>
<rect x="789.2" y="39.2" width="19.5" height="15.4" rx="1.6" fill="none" stroke="#ababab" stroke-width="2.2"/>
<path d="M797 42.8H801L799 40.9Z M797 51.1H801L799 53Z M793 44.9V48.9L790.8 46.9Z M805 44.9V48.9L807.2 46.9Z" fill="#ababab"/>
<path d="M830.5 37.2V53.2L834.6 49.7L837.5 55.8L840 54.6L837.2 48.8L843.3 48.8Z" fill="#666"/>
<rect x="824" y="58" width="24" height="2" fill="#555"/>
<path d="M888.2 39.95H894.15V45.9M894.2 39.9L887.6 46.5" stroke="#ababab" stroke-width="1.8" fill="none"/>
<path d="M877.85 50V55.95H884M877.8 56L884.4 49.5" stroke="#ababab" stroke-width="1.8" fill="none"/>
<path d="M922 46.2V42.2H926M930 42.2H934V46.2M934 50V54H930M926 54H922V50" stroke="#ababab" stroke-width="2" fill="none"/>
<path d="M963.8 40.9H966.8L968.2 39H974L975.4 40.9H978.2Q979.9 40.9 979.9 42.6V53Q979.9 54.7 978.2 54.7H963.8Q962.1 54.7 962.1 53V42.6Q962.1 40.9 963.8 40.9Z M971.1 43.6A4.3 4.3 0 1 0 971.11 43.6Z M971.1 45.1A2.8 2.8 0 1 1 971.09 45.1Z" fill="#ababab" fill-rule="evenodd"/>
<path d="M1000.62 41.57 L1000.77 38.97 L1005.23 38.97 L1005.38 41.57 L1007.29 42.67 L1009.62 41.51 L1011.84 45.37 L1009.67 46.80 L1009.67 49.00 L1011.84 50.43 L1009.62 54.29 L1007.29 53.13 L1005.38 54.23 L1005.23 56.83 L1000.77 56.83 L1000.62 54.23 L998.71 53.13 L996.38 54.29 L994.16 50.43 L996.33 49.00 L996.33 46.80 L994.16 45.37 L996.38 41.51 L998.71 42.67Z M996.10 47.90 a6.90 6.90 0 1 1 13.80 0 a6.90 6.90 0 1 1 -13.80 0Z" fill="#ababab" fill-rule="nonzero"/>
<circle cx="1003" cy="47.9" r="3.2" fill="#fafafa"/>
<path d="M903 15.5H913" stroke="#fff" stroke-width="1" shape-rendering="crispEdges"/>
<rect x="948.5" y="10.5" width="9" height="9" fill="none" stroke="#fff" stroke-width="1" shape-rendering="crispEdges"/>
<path d="M994 10.3L1004.2 20.5M1004.2 10.3L994 20.5" stroke="#fff" stroke-width="1.1" fill="none"/>
<defs><linearGradient id="ml" x1="14" y1="0" x2="24.5" y2="0" gradientUnits="userSpaceOnUse"><stop offset="0" stop-color="#7a1b10"/><stop offset="0.32" stop-color="#a92d15"/><stop offset="0.5" stop-color="#e8781c"/><stop offset="0.58" stop-color="#f5a030"/><stop offset="0.72" stop-color="#d9501c"/><stop offset="1" stop-color="#a82c14"/></linearGradient><linearGradient id="ml2" x1="0" y1="18.5" x2="0" y2="22" gradientUnits="userSpaceOnUse"><stop offset="0" stop-color="#f7c22e" stop-opacity="0"/><stop offset="1" stop-color="#f7c22e" stop-opacity="1"/></linearGradient></defs>
<path d="M9.6 15.4L14.6 13.6L15.4 17.6L13 17.8Z" fill="#5ea6e0" opacity="0.75"/>
<path d="M14.2 15.8L16.5 13Q18.3 9.5 19.4 8Q20.1 7.5 20.8 8.6Q22.3 12.5 24.6 18.9Q22.8 17.3 21.6 17.2Q19.6 18.2 16.5 21.9L14.2 18.3Z" fill="url(#ml)"/>
<path d="M14.2 15.8L16.5 13Q18.3 9.5 19.4 8Q20.1 7.5 20.8 8.6Q22.3 12.5 24.6 18.9Q22.8 17.3 21.6 17.2Q19.6 18.2 16.5 21.9L14.2 18.3Z" fill="url(#ml2)"/>
</svg>
<div id="winborder" class="abs"></div>
</body>
</html>
